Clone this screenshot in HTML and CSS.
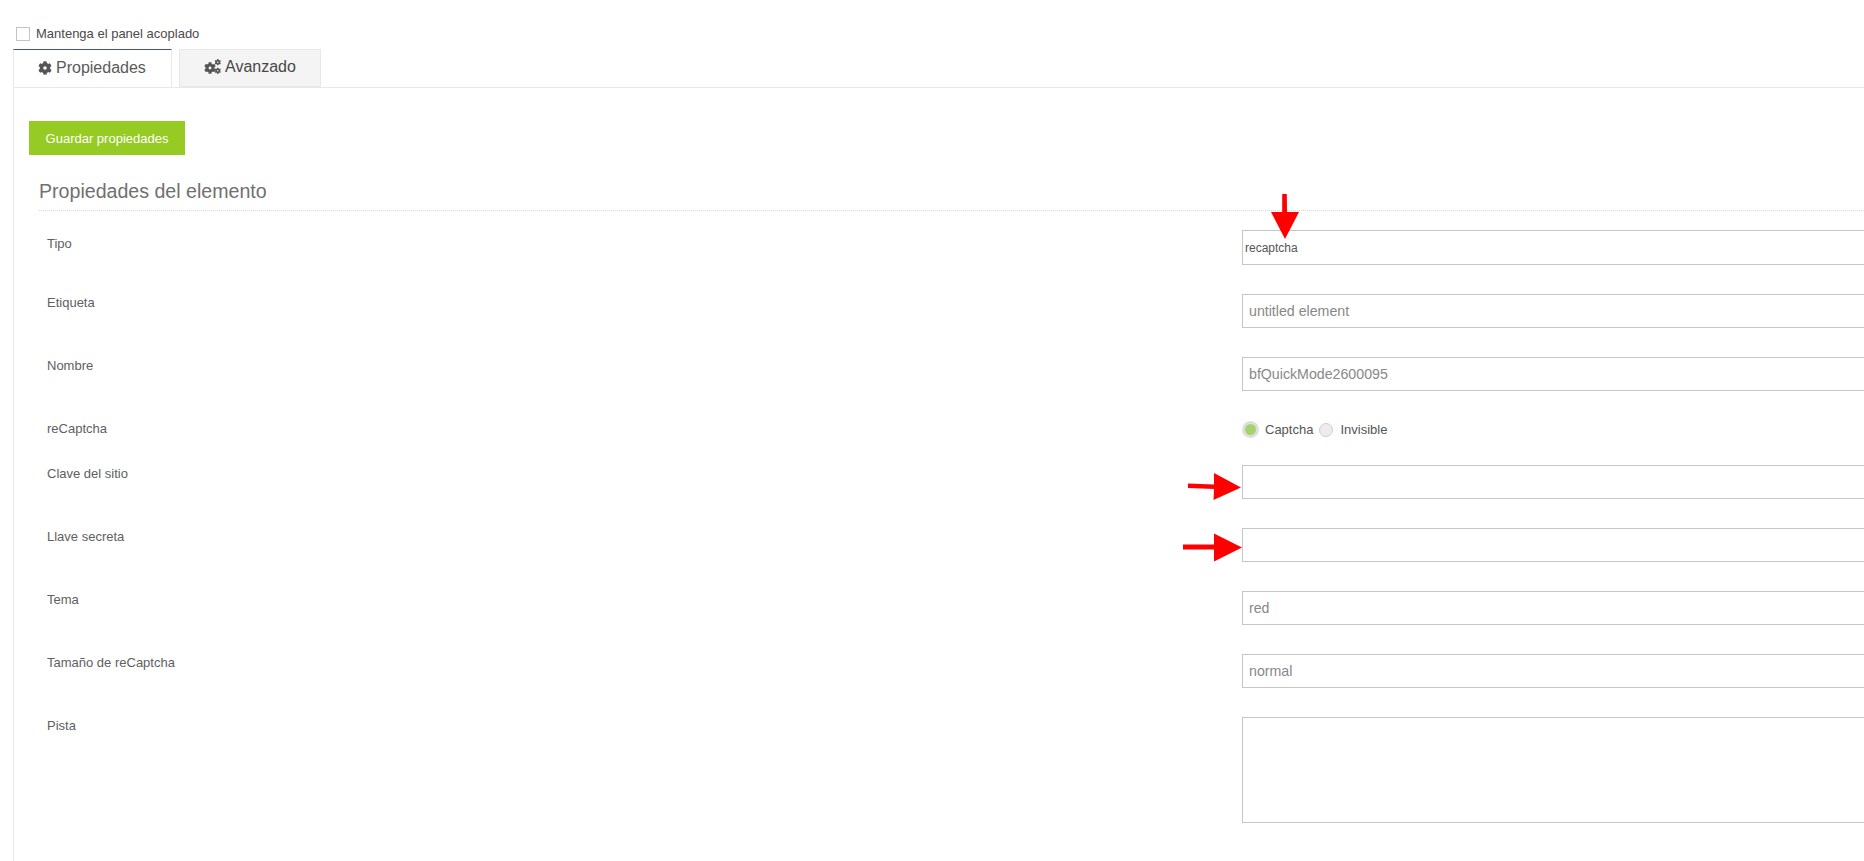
FILE: index.html
```html
<!DOCTYPE html>
<html lang="es">
<head>
<meta charset="utf-8">
<title>Propiedades del elemento</title>
<link rel="stylesheet" href="styles.css">
</head>
<body>
<svg class="defs" width="0" height="0" aria-hidden="true">
  <symbol id="cog" viewBox="0 0 512 512">
    <path d="M487.4 315.7l-42.6-24.6c4.3-23.2 4.3-47 0-70.2l42.6-24.6c4.9-2.8 7.1-8.6 5.5-14-11.1-35.6-30-67.8-54.7-94.6-3.8-4.1-10-5.1-14.8-2.3L380.8 110c-17.9-15.4-38.5-27.3-60.8-35.1V25.8c0-5.6-3.9-10.5-9.4-11.7-36.7-8.2-74.3-7.8-109.2 0-5.5 1.2-9.4 6.1-9.4 11.7V75c-22.2 7.9-42.8 19.8-60.8 35.1L88.7 85.5c-4.9-2.8-11-1.9-14.8 2.3-24.7 26.7-43.6 58.9-54.7 94.6-1.7 5.4.6 11.2 5.5 14L67.3 221c-4.3 23.2-4.3 47 0 70.2l-42.6 24.6c-4.9 2.8-7.1 8.6-5.5 14 11.1 35.6 30 67.8 54.7 94.6 3.8 4.1 10 5.1 14.8 2.3l42.6-24.6c17.9 15.4 38.5 27.3 60.8 35.1v49.2c0 5.6 3.9 10.5 9.4 11.7 36.7 8.2 74.3 7.8 109.2 0 5.5-1.2 9.4-6.1 9.4-11.7v-49.2c22.2-7.9 42.8-19.8 60.8-35.1l42.6 24.6c4.9 2.8 11 1.9 14.8-2.3 24.7-26.7 43.6-58.9 54.7-94.6 1.5-5.5-.7-11.3-5.6-14.1zM256 318c-34 0-62-28-62-62s28-62 62-62 62 28 62 62-28 62-62 62z"/>
  </symbol>
</svg>
<div class="page">
  <label class="dock"><span class="dock-box"></span>Mantenga el panel acoplado</label>
  <div class="tabs">
    <div class="tab tab-active">
      <svg class="icon-cog" viewBox="0 0 14 14"><use href="#cog" width="14" height="14"/></svg>
      <span>Propiedades</span>
    </div>
    <div class="tab tab-idle">
      <svg class="icon-cogs" viewBox="0 0 17 15"><use href="#cog" x="0" y="3" width="12" height="12"/><use href="#cog" x="10.500" y="0" width="6.500" height="6.500"/><use href="#cog" x="10.500" y="8.500" width="6.500" height="6.500"/></svg>
      <span>Avanzado</span>
    </div>
  </div>
  <div class="panel">
    <button class="save" type="button">Guardar propiedades</button>
    <h2 class="title">Propiedades del elemento</h2>
    <div class="form">
      <div class="row row-type"><div class="label">Tipo</div><div class="field"><input class="input input-type" value="recaptcha"></div></div>
      <div class="row"><div class="label">Etiqueta</div><div class="field"><input class="input" placeholder="untitled element"></div></div>
      <div class="row"><div class="label">Nombre</div><div class="field"><input class="input" placeholder="bfQuickMode2600095"></div></div>
      <div class="row row-radio"><div class="label">reCaptcha</div><div class="field radios">
        <span class="radio radio-on"></span><span class="radio-text">Captcha</span>
        <span class="radio"></span><span class="radio-text">Invisible</span>
      </div></div>
      <div class="row"><div class="label">Clave del sitio</div><div class="field"><input class="input"></div></div>
      <div class="row"><div class="label">Llave secreta</div><div class="field"><input class="input"></div></div>
      <div class="row"><div class="label">Tema</div><div class="field"><input class="input" placeholder="red"></div></div>
      <div class="row"><div class="label">Tamaño de reCaptcha</div><div class="field"><input class="input" placeholder="normal"></div></div>
      <div class="row"><div class="label">Pista</div><div class="field"><textarea class="input area"></textarea></div></div>
    </div>
  </div>
</div>
<svg class="arrow arrow-down" width="30" height="48" viewBox="0 0 30 48"><path d="M12.2 0h4.600l.2 18H29L15 45 1 18h11.200z"/></svg>
<svg class="arrow arrow-key" width="54" height="30" viewBox="0 0 54 30"><path d="M0 11.500l26 1V1l27 14.500L25.500 28l.5-11L0 16z"/></svg>
<svg class="arrow arrow-secret" width="60" height="30" viewBox="0 0 60 30"><path d="M0 11.500h31V.5l28 14-28 14V16.500H0z"/></svg>
</body>
</html>
```
FILE: styles.css
```css
* { box-sizing: border-box; }
html, body {
  margin: 0;
  height: 100%;
  overflow: hidden;
  background: #fff;
  font-family: "Liberation Sans", Arial, sans-serif;
  color: #555;
}
.defs { position: absolute; }
.page { padding: 25px 0 0 13px; width: 1864px; height: 861px; overflow: hidden; }
.dock {
  display: flex;
  align-items: center;
  height: 17px;
  padding-left: 3px;
  font-size: 13px;
  color: #4a4a4a;
}
.dock-box {
  width: 14px;
  height: 14px;
  margin-right: 6px;
  border: 1px solid #c4c4c4;
  background: #fff;
}
.tabs {
  display: flex;
  margin-top: 7px;
  height: 39px;
}
.tab {
  display: flex;
  align-items: center;
  padding-left: 24px;
  font-size: 16px;
  color: #5a5a5a;
}
.tab-active {
  width: 159px;
  border-top: 1px solid #3f51a5;
  border-left: 1px solid #e8e8e8;
  border-right: 1px solid #e8e8e8;
  padding-bottom: 2px;
  gap: 4px;
}
.tab-idle {
  width: 142px;
  margin-left: 7px;
  margin-bottom: 1px;
  border: 1px solid #e8e8e8;
  background: #f4f4f4;
  color: #484848;
  padding-bottom: 3px;
  gap: 4px;
}
.icon-cog { width: 14px; height: 14px; fill: #555; }
.icon-cogs { width: 17px; height: 15px; fill: #555; }
.panel {
  height: 774px;
  border-top: 1px solid #e8e8e8;
  border-left: 1px solid #e8e8e8;
  margin-top: -1px;
  padding: 33px 0 0 15px;
}
.save {
  display: block;
  width: 156px;
  height: 34px;
  padding: 0;
  border: 0;
  background: #95cb22;
  color: #fff;
  font: 13px "Liberation Sans", Arial, sans-serif;
}
.title {
  margin: 25px 0 0 10px;
  height: 31px;
  padding: 0;
  border-bottom: 1px dotted #d6d6d6;
  font-size: 19.6px;
  line-height: 23px;
  font-weight: 400;
  color: #707070;
}
.form { margin-left: 10px; margin-top: 19px; }
.row {
  display: flex;
  height: 34px;
  margin-bottom: 29px;
}
.row-type { height: 35px; }
.row-type .label { padding-top: 6px; }
.row-radio { height: 19px; margin-bottom: 26px; }
.label {
  width: 1203px;
  flex: none;
  padding: 1px 0 0 8px;
  font-size: 13px;
  line-height: 16px;
  color: #606060;
}
.field { flex: 1; min-width: 0; }
.input {
  display: block;
  width: 800px;
  height: 34px;
  padding: 0 6px;
  border: 1px solid #c6c6c6;
  border-radius: 0;
  outline: 0;
  background: #fff;
  font: 14.2px "Liberation Sans", Arial, sans-serif;
  color: #666;
}
.input::placeholder { color: #888; opacity: 1; }
.input-type { height: 35px; padding: 0 2px; font-size: 12px; color: #555; }
.area { height: 106px; resize: none; }
.row:last-child { height: 106px; margin-bottom: 0; }
.radios { display: flex; align-items: center; height: 19px; }
.radio {
  width: 14px;
  height: 14px;
  border-radius: 50%;
  border: 1px solid #cfcfcf;
  background: #ececec;
  margin-right: 7px;
}
.radio-on {
  width: 17px;
  height: 17px;
  border: 3px solid #dedede;
  background: #a5d46e;
  margin-right: 6px;
}
.radio-text { font-size: 13px; color: #555; margin-right: 6px; }
.arrow { position: absolute; fill: #f00; }
.arrow-down { left: 1270px; top: 194px; }
.arrow-key { left: 1188px; top: 472px; }
.arrow-secret { left: 1183px; top: 533px; }
```
